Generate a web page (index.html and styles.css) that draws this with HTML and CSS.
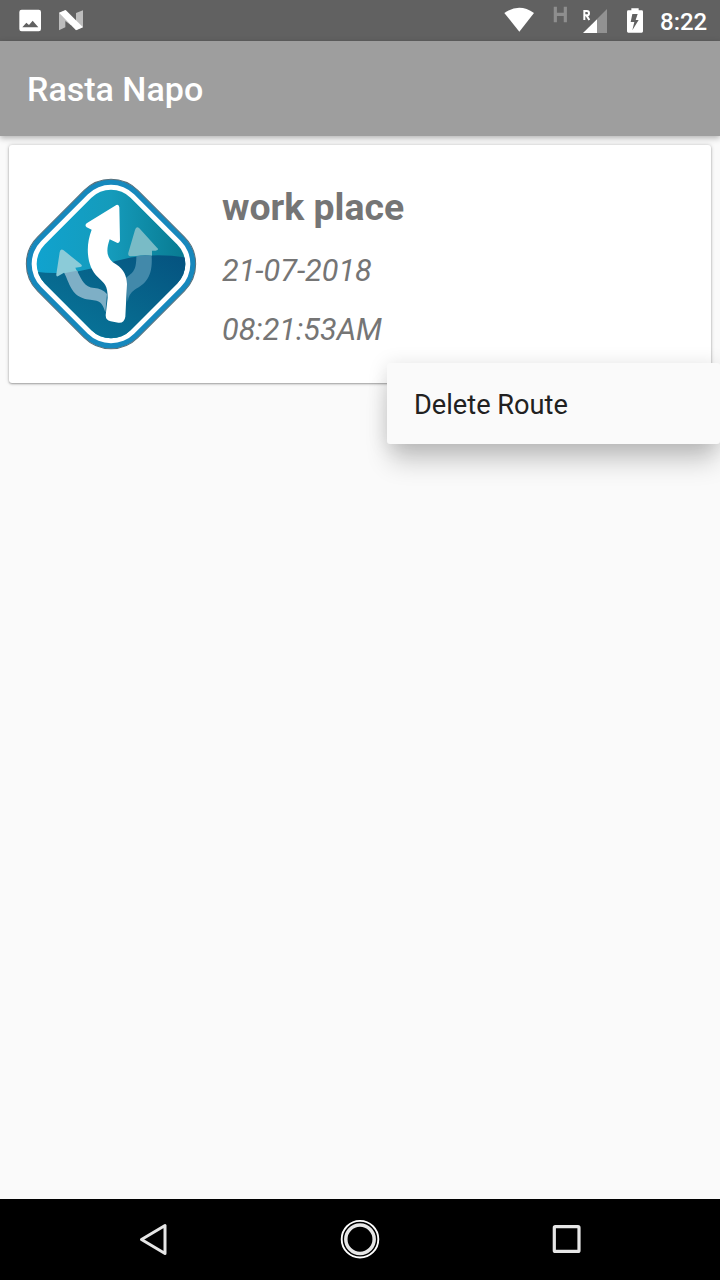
FILE: index.html
```html
<!DOCTYPE html>
<html lang="en">
<head>
<meta charset="utf-8">
<title>Rasta Napo</title>
<link rel="stylesheet" href="styles.css">
</head>
<body>
<div class="screen">
  <header class="status-bar">
    <svg class="status-icons" width="120" height="41" viewBox="0 0 360 123">
      <path fill="#fff" fill-rule="evenodd" d="M65 29h51q7 0 7 7v51q0 7-7 7H65q-7 0-7-7V36q0-7 7-7zM67 82h48L98 62 87 75 79 68z"/>
      <path fill="#bdbdbd" d="M177 39l18-8 18 28v17l-17-13v19l-19 9zM249 31v50l-19 9-19-27 17 10V39z"/>
      <path fill="#fff" d="M177 38l20-8 52 52-21 9z"/>
    </svg>
    <div class="status-right">
      <svg width="160" height="41" viewBox="0 0 480 123">
        <path fill="#fff" d="M43 39Q88 8 132 39L88 95z"/>
        <path fill="none" stroke="#8e8e8e" stroke-width="9.500" d="M196 20v47M226 20v47M196 43h30"/>
        <path fill="none" stroke="#fff" stroke-width="6" d="M283 60V33h7q7 0 7 6.500t-7 6.500h-7M290 47l8 13"/>
        <path fill="#929292" d="M351 27v72h-30V57z"/>
        <path fill="#fff" d="M321 58v41h-42z"/>
        <path fill="#fff" fill-rule="evenodd" d="M424 25h22v6h9q4 0 4 4v59q0 4-4 4h-40q-4 0-4-4V35q0-4 4-4h9zM427 42L422 66H433L427 91L446 60H437L443 42z"/>
      </svg>
      <span class="clock">8:22</span>
    </div>
  </header>

  <div class="app-bar"><h1 class="app-title">Rasta Napo</h1></div>

  <main class="content">
    <article class="route-card">
      <svg class="route-logo" width="190" height="190" viewBox="0 0 570 570">
        <defs>
          <linearGradient id="sky" x1="0" y1="0" x2="1" y2="0">
            <stop offset="0" stop-color="#10a3cf"/><stop offset=".5" stop-color="#159bbb"/><stop offset="1" stop-color="#08798f"/>
          </linearGradient>
          <linearGradient id="ground" x1="0" y1="1" x2="1" y2="0">
            <stop offset="0" stop-color="#087ba0"/><stop offset=".5" stop-color="#07678d"/><stop offset="1" stop-color="#05527f"/>
          </linearGradient>
          <clipPath id="face"><rect x="103" y="100" width="364" height="364" rx="83" transform="rotate(45 285 282)"/></clipPath>
        </defs>
        <rect x="72" y="69" width="426" height="426" rx="114" transform="rotate(45 285 282)" fill="#1688bd" stroke="#56707c" stroke-width="3"/>
        <rect x="88" y="85" width="394" height="394" rx="98" transform="rotate(45 285 282)" fill="#fff"/>
        <g clip-path="url(#face)">
          <rect x="55" y="50" width="460" height="460" fill="url(#sky)"/>
          <path fill="url(#ground)" d="M50 304Q160 320 265 284Q385 240 520 264V520H50z"/>
        </g>
        <path fill="#8bcbd8" d="M143 241L194 282Q202 288 193 291L178 293Q181 301 186 307L150 314Q147 309 144 308L127 318Q120 322 121 312L131 247Q133 234 143 241z"/>
        <path fill="#7eafc6" d="M145 310Q162 305 183 302C200 333 204 350 235 354Q258 355 273 372L268 427C257 385 240 393 205 386C165 375 160 338 145 310z"/>
        <path fill="#79bbc6" d="M370 175L423 233Q431 240 419 242H408V257Q385 254 360 258L343 259Q335 259 337 248L357 180Q361 166 370 175z"/>
        <path fill="#4289aa" d="M361 259Q385 254 407 257C411 323 387 341 356 359Q338 371 335 395L329 324C353 307 361 300 361 259z"/>
        <path fill="#fff" d="M301 105Q309 102 310 112L312 211Q310 222 303 218L281 208C268 246 273 267 300 283C325 300 331 316 333 342L328 440Q325 460 307 458L284 454Q269 451 269 436L275 383C275 347 266 341 246 322C211 289 208 227 227 179L212 172Q205 166 212 160z"/>
      </svg>
      <div class="route-details">
        <h2 class="route-name">work place</h2>
        <p class="route-stamp">21-07-2018</p>
        <p class="route-stamp">08:21:53AM</p>
      </div>
    </article>
    <div class="popup-menu"><span class="menu-item">Delete Route</span></div>
  </main>

  <nav class="nav-bar">
    <svg width="40" height="40" viewBox="0 0 40 40"><path d="M8.500 20.500L32 6.500v28z" fill="none" stroke="#e6e6e6" stroke-width="3" stroke-linejoin="round"/></svg>
    <svg width="40" height="40" viewBox="0 0 40 40"><circle cx="20" cy="20.200" r="18.300" fill="none" stroke="#fff" stroke-width="1.900"/><circle cx="20" cy="20.200" r="14.200" fill="none" stroke="#e6e6e6" stroke-width="3.500"/></svg>
    <svg width="40" height="40" viewBox="0 0 40 40"><rect x="7.300" y="7.700" width="24.700" height="24.700" rx="1" fill="none" stroke="#e6e6e6" stroke-width="3.200"/></svg>
  </nav>
</div>
</body>
</html>
```
FILE: styles.css
```css
* { box-sizing: border-box; }
body { margin: 0; font-family: Roboto, "Liberation Sans", sans-serif; }
h1, h2, p { margin: 0; }
svg { display: block; flex: none; }
.screen {
  display: flex;
  flex-direction: column;
  width: 720px;
  height: 1280px;
  overflow: hidden;
  background: #fafafa;
}
.status-bar {
  display: flex;
  flex: none;
  justify-content: space-between;
  height: 41px;
  background: #616161;
}
.status-right { display: flex; width: 230px; }
.clock {
  padding-left: 10px;
  color: #fff;
  font-size: 24px;
  font-weight: 500;
  line-height: 45px;
  white-space: nowrap;
}
.app-bar {
  position: relative;
  display: flex;
  flex: none;
  align-items: center;
  height: 95px;
  padding: 1px 27px 0;
  background: #9e9e9e;
  box-shadow: 0 2px 6px rgba(0, 0, 0, .3);
}
.app-title { color: #fff; font-size: 34px; font-weight: 500; line-height: 40px; }
.content { position: relative; flex: 1; padding: 9px 9px 0; }
.route-card {
  display: flex;
  gap: 16px;
  height: 238px;
  padding: 25px 7px 0;
  background: #fff;
  border-radius: 3px;
  box-shadow: 0 1px 2px rgba(0, 0, 0, .3), 0 0 4px rgba(0, 0, 0, .18);
}
.route-details { padding-top: 14px; color: #757575; }
.route-name { margin-bottom: 21px; font-size: 37.4px; font-weight: 700; line-height: 46px; }
.route-stamp { margin-bottom: 18px; font-size: 30.6px; font-style: italic; line-height: 40.500px; }
.popup-menu {
  position: absolute;
  top: 227px;
  left: 387px;
  display: flex;
  align-items: center;
  width: 333px;
  height: 81px;
  padding: 2px 27px 0;
  background: #fafafa;
  border-radius: 3px;
  box-shadow: 0 21px 26px -4px rgba(0, 0, 0, .2), 0 2px 20px rgba(0, 0, 0, .13);
}
.menu-item { color: #212121; font-size: 27.200px; line-height: 32px; }
.nav-bar {
  display: flex;
  flex: none;
  align-items: center;
  justify-content: center;
  gap: 167px;
  height: 81px;
  padding-bottom: 1px;
  background: #000;
}
```
